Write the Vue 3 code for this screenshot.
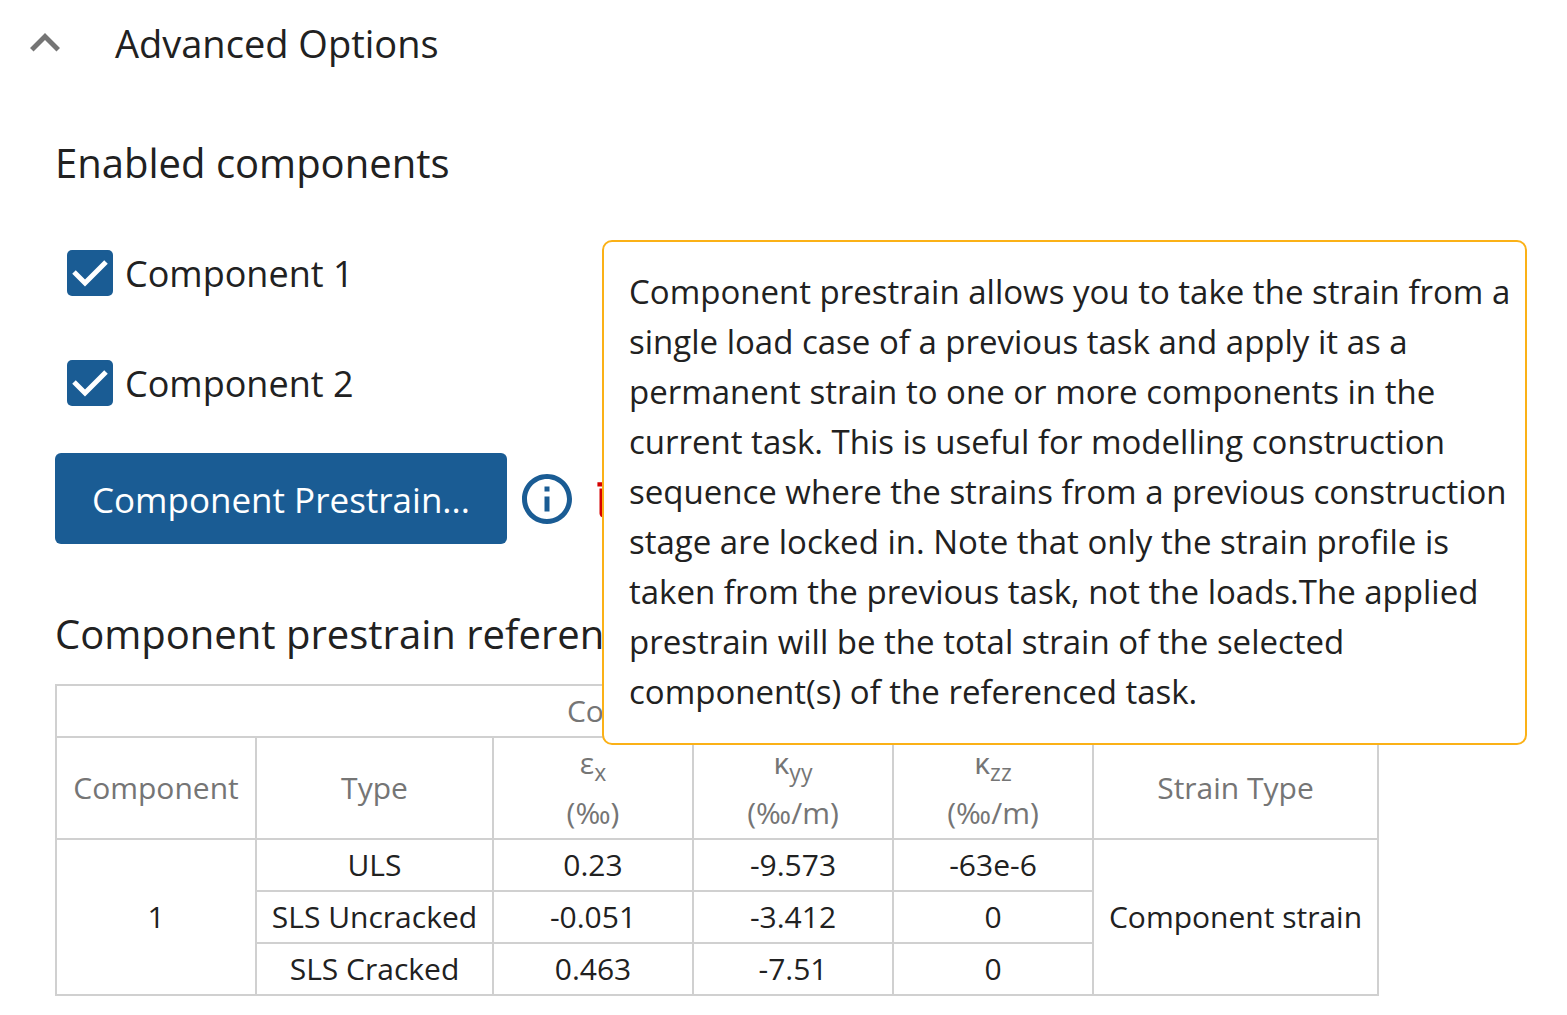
<script setup>
import { ref } from 'vue'

const components = ref([
  { id: 1, enabled: true },
  { id: 2, enabled: true },
])

const expanded = ref(true)

const strains = [
  { type: 'ULS', ex: '0.23', kyy: '-9.573', kzz: '-63e-6' },
  { type: 'SLS Uncracked', ex: '-0.051', kyy: '-3.412', kzz: '0' },
  { type: 'SLS Cracked', ex: '0.463', kyy: '-7.51', kzz: '0' },
]
</script>

<template>
  <main class="panel">
    <button class="panel-header" type="button" :aria-expanded="expanded" @click="expanded = !expanded">
      <svg class="chevron" viewBox="0 0 24 24" aria-hidden="true">
        <path d="M12 8l-6 6 1.41 1.41L12 10.83l4.59 4.58L18 14z" />
      </svg>
      <span>Advanced Options</span>
    </button>

    <div v-if="expanded" class="panel-body">
      <h2>Enabled components</h2>
      <ul class="components">
        <li v-for="c in components" :key="c.id">
          <input :id="`component-${c.id}`" v-model="c.enabled" type="checkbox" />
          <label :for="`component-${c.id}`">Component {{ c.id }}</label>
        </li>
      </ul>

      <div class="actions">
        <button class="primary" type="button">Component Prestrain...</button>
        <button class="icon-button info" type="button" aria-label="About component prestrain" aria-describedby="prestrain-help">
          <svg viewBox="0 0 24 24" aria-hidden="true">
            <path d="M11 7h2v2h-2zm0 4h2v6h-2zm1-9C6.48 2 2 6.48 2 12s4.48 10 10 10 10-4.48 10-10S17.52 2 12 2zm0 18c-4.41 0-8-3.59-8-8s3.59-8 8-8 8 3.59 8 8-3.59 8-8 8z" />
          </svg>
        </button>
        <button class="icon-button delete" type="button" aria-label="Delete component prestrain">
          <svg viewBox="0 0 24 24" aria-hidden="true">
            <path d="M6 19c0 1.1.9 2 2 2h8c1.1 0 2-.9 2-2V7H6v12zM19 4h-3.5l-1-1h-5l-1 1H5v2h14V4z" />
          </svg>
        </button>
      </div>

      <h2>Component prestrain reference</h2>
      <table>
        <colgroup>
          <col class="col-value" />
          <col class="col-type" />
          <col class="col-value" />
          <col class="col-value" />
          <col class="col-value" />
          <col class="col-strain" />
        </colgroup>
        <thead>
          <tr>
            <th colspan="6">Component Prestrain</th>
          </tr>
          <tr>
            <th>Component</th>
            <th>Type</th>
            <th>ε<sub>x</sub><br />(‰)</th>
            <th>κ<sub>yy</sub><br />(‰/m)</th>
            <th>κ<sub>zz</sub><br />(‰/m)</th>
            <th>Strain Type</th>
          </tr>
        </thead>
        <tbody>
          <tr v-for="(row, i) in strains" :key="row.type">
            <td v-if="i === 0" :rowspan="strains.length">1</td>
            <td>{{ row.type }}</td>
            <td>{{ row.ex }}</td>
            <td>{{ row.kyy }}</td>
            <td>{{ row.kzz }}</td>
            <td v-if="i === 0" :rowspan="strains.length">Component strain</td>
          </tr>
        </tbody>
      </table>
    </div>

    <div id="prestrain-help" class="tooltip" role="tooltip">
      Component prestrain allows you to take the strain from a single load case of a previous task
      and apply it as a permanent strain to one or more components in the current task. This is
      useful for modelling construction sequence where the strains from a previous construction
      stage are locked in. Note that only the strain profile is taken from the previous task, not
      the loads.The applied prestrain will be the total strain of the selected component(s) of the
      referenced task.
    </div>
  </main>
</template>

<style>
body {
  background: #fff;
}
</style>

<style scoped>
.panel {
  position: relative;
  color: #212121;
  font-family: 'Open Sans', 'Noto Sans', sans-serif;
  font-size: 33px;
}

button {
  border: 0;
  background: none;
  font-family: inherit;
  cursor: pointer;
}

.panel-header {
  display: flex;
  align-items: center;
  gap: 40px;
  width: 100%;
  height: 86px;
  padding: 0 15px;
  color: inherit;
  font-size: 38px;
  text-align: left;
}

.chevron {
  width: 60px;
  height: 60px;
  fill: #757575;
}

.panel-body {
  padding: 47px 55px 20px;
}

h2 {
  margin: 0;
  font-size: 40px;
  font-weight: 400;
  line-height: 60px;
}

.components {
  margin: 25px 0 15px;
  padding: 0 12px;
  list-style: none;
}

.components li {
  display: flex;
  align-items: center;
  gap: 12px;
  height: 110px;
  font-size: 36px;
}

input[type='checkbox'] {
  appearance: none;
  width: 46px;
  height: 46px;
  margin: 0;
  border: 5px solid #757575;
  border-radius: 5px;
}

input[type='checkbox']:checked {
  border: 0;
  background: #1a5c94 url("data:image/svg+xml,%3Csvg xmlns='http://www.w3.org/2000/svg' viewBox='0 0 46 46'%3E%3Cpath d='M7 22l11 11L39 12' fill='none' stroke='white' stroke-width='5'/%3E%3C/svg%3E") center / 100% no-repeat;
}

.actions {
  display: flex;
  align-items: center;
  margin-bottom: 60px;
}

.primary {
  height: 91px;
  padding: 2px 37px 0;
  border-radius: 6px;
  background: #1a5c94;
  color: #fff;
  font-size: 35px;
}

.icon-button {
  display: flex;
  padding: 0;
}

.info {
  margin: 0 10px;
}

.info svg {
  width: 60px;
  height: 60px;
  fill: #1a5c94;
}

.delete svg {
  width: 50px;
  height: 50px;
  fill: #d50000;
}

table {
  width: 1324px;
  margin-top: 20px;
  border-collapse: collapse;
  table-layout: fixed;
  font-size: 30px;
  line-height: 50px;
  text-align: center;
}

.col-value {
  width: 200px;
}

.col-type {
  width: 237px;
}

.col-strain {
  width: 285px;
}

th,
td {
  padding: 0;
  border: 2px solid #d0d0d0;
}

th {
  color: #757575;
  font-weight: 400;
}

sub {
  font-size: 23px;
  line-height: 0;
}

.tooltip {
  position: absolute;
  top: 240px;
  right: 40px;
  left: 602px;
  padding: 25px 12px 26px 25px;
  border: 2px solid #fbb117;
  border-radius: 10px;
  background: #fff;
  line-height: 50px;
}
</style>
